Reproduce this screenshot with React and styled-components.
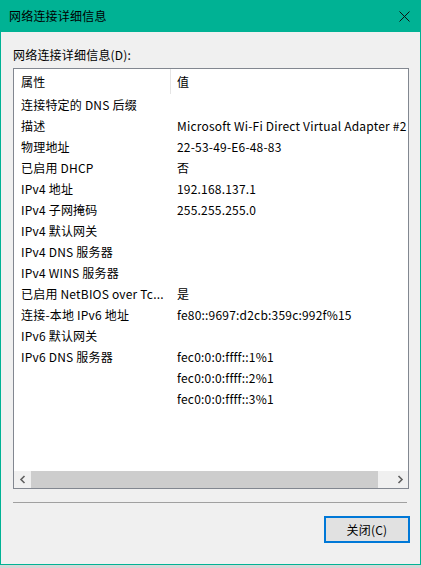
import React from 'react'
import styled, { createGlobalStyle } from 'styled-components'

const GlobalStyle = createGlobalStyle`
  html, body {
    margin: 0;
    padding: 0;
    background: #d6d6d6;
  }
  body {
    font-family: "Noto Sans CJK SC", "Liberation Sans", sans-serif;
    font-size: 12px;
    letter-spacing: 0.2px;
    color: #000;
  }
`

const ACCENT = '#00b294'

const Window = styled.div`
  width: 421px;
  height: 565px;
  box-sizing: border-box;
  border: 1px solid ${ACCENT};
  border-top: none;
  background: #f0f0f0;
  display: flex;
  flex-direction: column;
`

const TitleBar = styled.div`
  height: 32px;
  flex-shrink: 0;
  background: ${ACCENT};
  display: flex;
  align-items: center;
  justify-content: space-between;
  padding: 0 9px 0 8px;
`

const Title = styled.span`
  font-size: 12px;
  line-height: 16px;
`

const CloseIcon = styled.svg`
  width: 11px;
  height: 11px;
  margin-right: 1px;
`

const Body = styled.div`
  flex: 1;
  display: flex;
  flex-direction: column;
  padding: 15px 11px 0 12px;
`

const Label = styled.div`
  line-height: 16px;
  margin-bottom: 5px;
`

const ListBox = styled.div`
  width: 396px;
  height: 421px;
  box-sizing: border-box;
  border: 1px solid #828790;
  background: #fff;
  display: flex;
  flex-direction: column;
  overflow: hidden;
`

const Rows = styled.div`
  flex: 1;
  overflow: hidden;
`

const Row = styled.div`
  display: flex;
  height: ${p => (p.$header ? 25 : 21)}px;
  align-items: center;
  white-space: nowrap;
`

const KeyCell = styled.div`
  width: 157px;
  flex-shrink: 0;
  box-sizing: border-box;
  padding: 0 4px 0 7px;
  overflow: hidden;
  height: 100%;
  display: flex;
  align-items: center;
  border-right: ${p => (p.$header ? '1px solid #e5e5e5' : '1px solid transparent')};
`

const ValueCell = styled.div`
  padding-left: 6px;
  white-space: nowrap;
`

const HScroll = styled.div`
  height: 17px;
  flex-shrink: 0;
  display: flex;
  background: #f0f0f0;
`

const ScrollArrow = styled.div`
  width: 17px;
  display: flex;
  align-items: center;
  justify-content: center;
`

const Track = styled.div`
  flex: 1;
  display: flex;
  padding-right: 13px;
`

const Thumb = styled.div`
  flex: 1;
  background: #cdcdcd;
`

const Separator = styled.div`
  width: 394px;
  height: 1px;
  background: #a0a0a0;
  margin-top: 13px;
`

const Footer = styled.div`
  display: flex;
  justify-content: flex-end;
  padding-top: 13px;
`

const Button = styled.button`
  width: 86px;
  height: 27px;
  box-sizing: border-box;
  border: 2px solid #0078d7;
  background: #e1e1e1;
  font-family: inherit;
  font-size: 12px;
  letter-spacing: inherit;
  color: #000;
  padding: 0;
  margin-right: -1px;
`

const rows = [
  ['连接特定的 DNS 后缀', ''],
  ['描述', 'Microsoft Wi-Fi Direct Virtual Adapter #2'],
  ['物理地址', '22-53-49-E6-48-83'],
  ['已启用 DHCP', '否'],
  ['IPv4 地址', '192.168.137.1'],
  ['IPv4 子网掩码', '255.255.255.0'],
  ['IPv4 默认网关', ''],
  ['IPv4 DNS 服务器', ''],
  ['IPv4 WINS 服务器', ''],
  ['已启用 NetBIOS over Tc...', '是'],
  ['连接-本地 IPv6 地址', 'fe80::9697:d2cb:359c:992f%15'],
  ['IPv6 默认网关', ''],
  ['IPv6 DNS 服务器', 'fec0:0:0:ffff::1%1'],
  ['', 'fec0:0:0:ffff::2%1'],
  ['', 'fec0:0:0:ffff::3%1'],
]

const Chevron = ({ dir }) => (
  <svg width="8" height="9" viewBox="0 0 8 9">
    <path
      d={dir === 'left' ? 'M5.5 1 L2 4.5 L5.5 8' : 'M2.5 1 L6 4.5 L2.5 8'}
      fill="none"
      stroke="#606060"
      strokeWidth="1.6"
    />
  </svg>
)

const App = () => {
  return (
    <>
      <GlobalStyle />
      <Window>
        <TitleBar>
          <Title>网络连接详细信息</Title>
          <CloseIcon viewBox="0 0 11 11">
            <path d="M0.5 0.5 L10.5 10.5 M10.5 0.5 L0.5 10.5" stroke="#111" strokeWidth="1" />
          </CloseIcon>
        </TitleBar>
        <Body>
          <Label>网络连接详细信息(D):</Label>
          <ListBox>
            <Rows>
              <Row $header>
                <KeyCell $header>属性</KeyCell>
                <ValueCell>值</ValueCell>
              </Row>
              {rows.map(([k, v], i) => (
                <Row key={i}>
                  <KeyCell>{k}</KeyCell>
                  <ValueCell>{v}</ValueCell>
                </Row>
              ))}
            </Rows>
            <HScroll>
              <ScrollArrow><Chevron dir="left" /></ScrollArrow>
              <Track><Thumb /></Track>
              <ScrollArrow><Chevron dir="right" /></ScrollArrow>
            </HScroll>
          </ListBox>
          <Separator />
          <Footer>
            <Button>关闭(C)</Button>
          </Footer>
        </Body>
      </Window>
    </>
  )
}

export default App
